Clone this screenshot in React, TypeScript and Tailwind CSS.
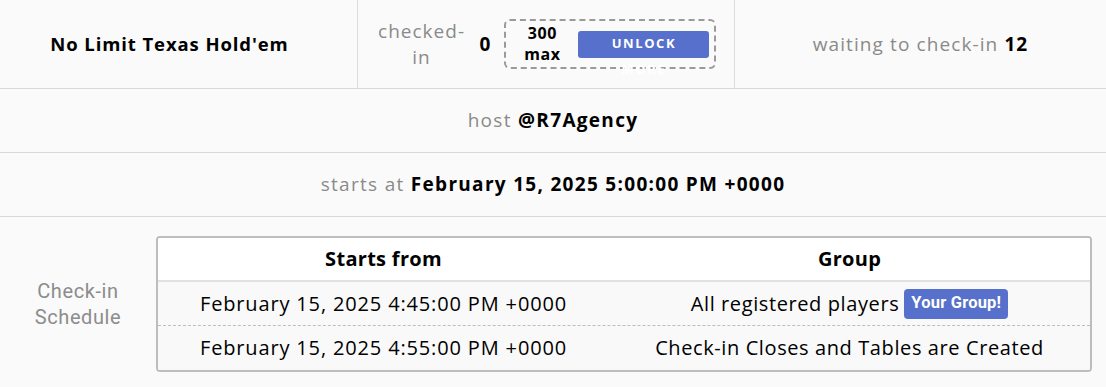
const FONT = 'font-["Open_Sans",sans-serif]';

const SCHEDULE = [
  { start: 'February 15, 2025 4:45:00 PM +0000', group: 'All registered players', mine: true },
  { start: 'February 15, 2025 4:55:00 PM +0000', group: 'Check-in Closes and Tables are Created', mine: false },
];

export default function App() {
  return (
    <div className={`w-[1106px] h-[387px] bg-[#fafafa] text-black overflow-hidden ${FONT}`}>
      {/* Top stats */}
      <div className="flex h-[89px] border-b border-[#d9d9d9]">
        <div className="w-[358px] flex items-center justify-center pr-[18px] border-r border-[#dcdcdc]">
          <span className="text-[18.5px] font-bold tracking-[0.9px]">No Limit Texas Hold'em</span>
        </div>
        <div className="w-[377px] flex items-center justify-center gap-3 border-r border-[#dcdcdc]">
          <span className="w-[92px] text-center text-[19px] leading-[26px] tracking-[1px] text-[#8a8a8a]">checked-<br />in</span>
          <span className="text-[19px] font-bold">0</span>
          <div className="relative ml-[2px] w-[212px] h-[50px] flex items-center border-2 border-dashed border-[#9a9a9a] rounded-[6px]">
            <div className="w-[72px] text-center text-[16px] font-bold leading-[21px] tracking-[0.6px]">300<br />max</div>
            <div className="relative">
              <button className="w-[131px] h-[27px] rounded-[3px] bg-[#5670cb] text-white text-[13px] font-bold tracking-[1.6px]">
                UNLOCK
              </button>
              <span className="absolute left-0 right-0 top-[30px] text-center text-white text-[13px] font-bold tracking-[1.6px]">MORE</span>
            </div>
          </div>
        </div>
        <div className="flex-1 flex items-center justify-center">
          <span className="text-[19px] tracking-[1.1px] text-[#8a8a8a]">waiting to check-in <b className="text-black">12</b></span>
        </div>
      </div>

      {/* Host */}
      <div className="h-[64px] flex items-center justify-center border-b border-[#d9d9d9] text-[19px] tracking-[1.3px]">
        <span className="text-[#8a8a8a]">host&nbsp;</span>
        <span className="font-bold">@R7Agency</span>
      </div>

      {/* Start time */}
      <div className="h-[64px] flex items-center justify-center border-b border-[#d9d9d9] text-[19px] tracking-[1.3px]">
        <span className="text-[#8a8a8a]">starts at&nbsp;</span>
        <span className="font-bold">February 15, 2025 5:00:00 PM +0000</span>
      </div>

      {/* Check-in schedule */}
      <div className="flex pt-[19px] pr-[14px]">
        <div className='w-[156px] flex items-center justify-center text-center text-[20px] leading-[26px] tracking-[0.6px] text-[#8c8c8c] font-["Roboto",sans-serif]'>
          Check-in<br />Schedule
        </div>
        <div className="flex-1 border-2 border-[#bdbdbd] rounded-[4px] overflow-hidden text-[20px] tracking-[0.6px]">
          <div className="flex h-[44px] bg-white border-b-2 border-[#e2e2e2] font-bold tracking-[0.3px]">
            <div className="w-[451px] flex items-center justify-center">Starts from</div>
            <div className="flex-1 flex items-center justify-center">Group</div>
          </div>
          {SCHEDULE.map((row, i) => (
            <div
              key={row.start}
              className={`flex h-[44px] bg-[#f9f9f9] ${i === 0 ? 'border-b border-dashed border-[#bdbdbd]' : ''}`}
            >
              <div className="w-[451px] flex items-center justify-center tracking-[0.85px]">{row.start}</div>
              <div className="flex-1 flex items-center justify-center gap-[5px]">
                <span>{row.group}</span>
                {row.mine && (
                  <span className='px-[7px] h-[30px] flex items-center rounded-[4px] bg-[#5670cb] text-white text-[16.5px] tracking-[0.2px] font-bold font-["Roboto",sans-serif]'>
                    Your Group!
                  </span>
                )}
              </div>
            </div>
          ))}
        </div>
      </div>
    </div>
  );
}
